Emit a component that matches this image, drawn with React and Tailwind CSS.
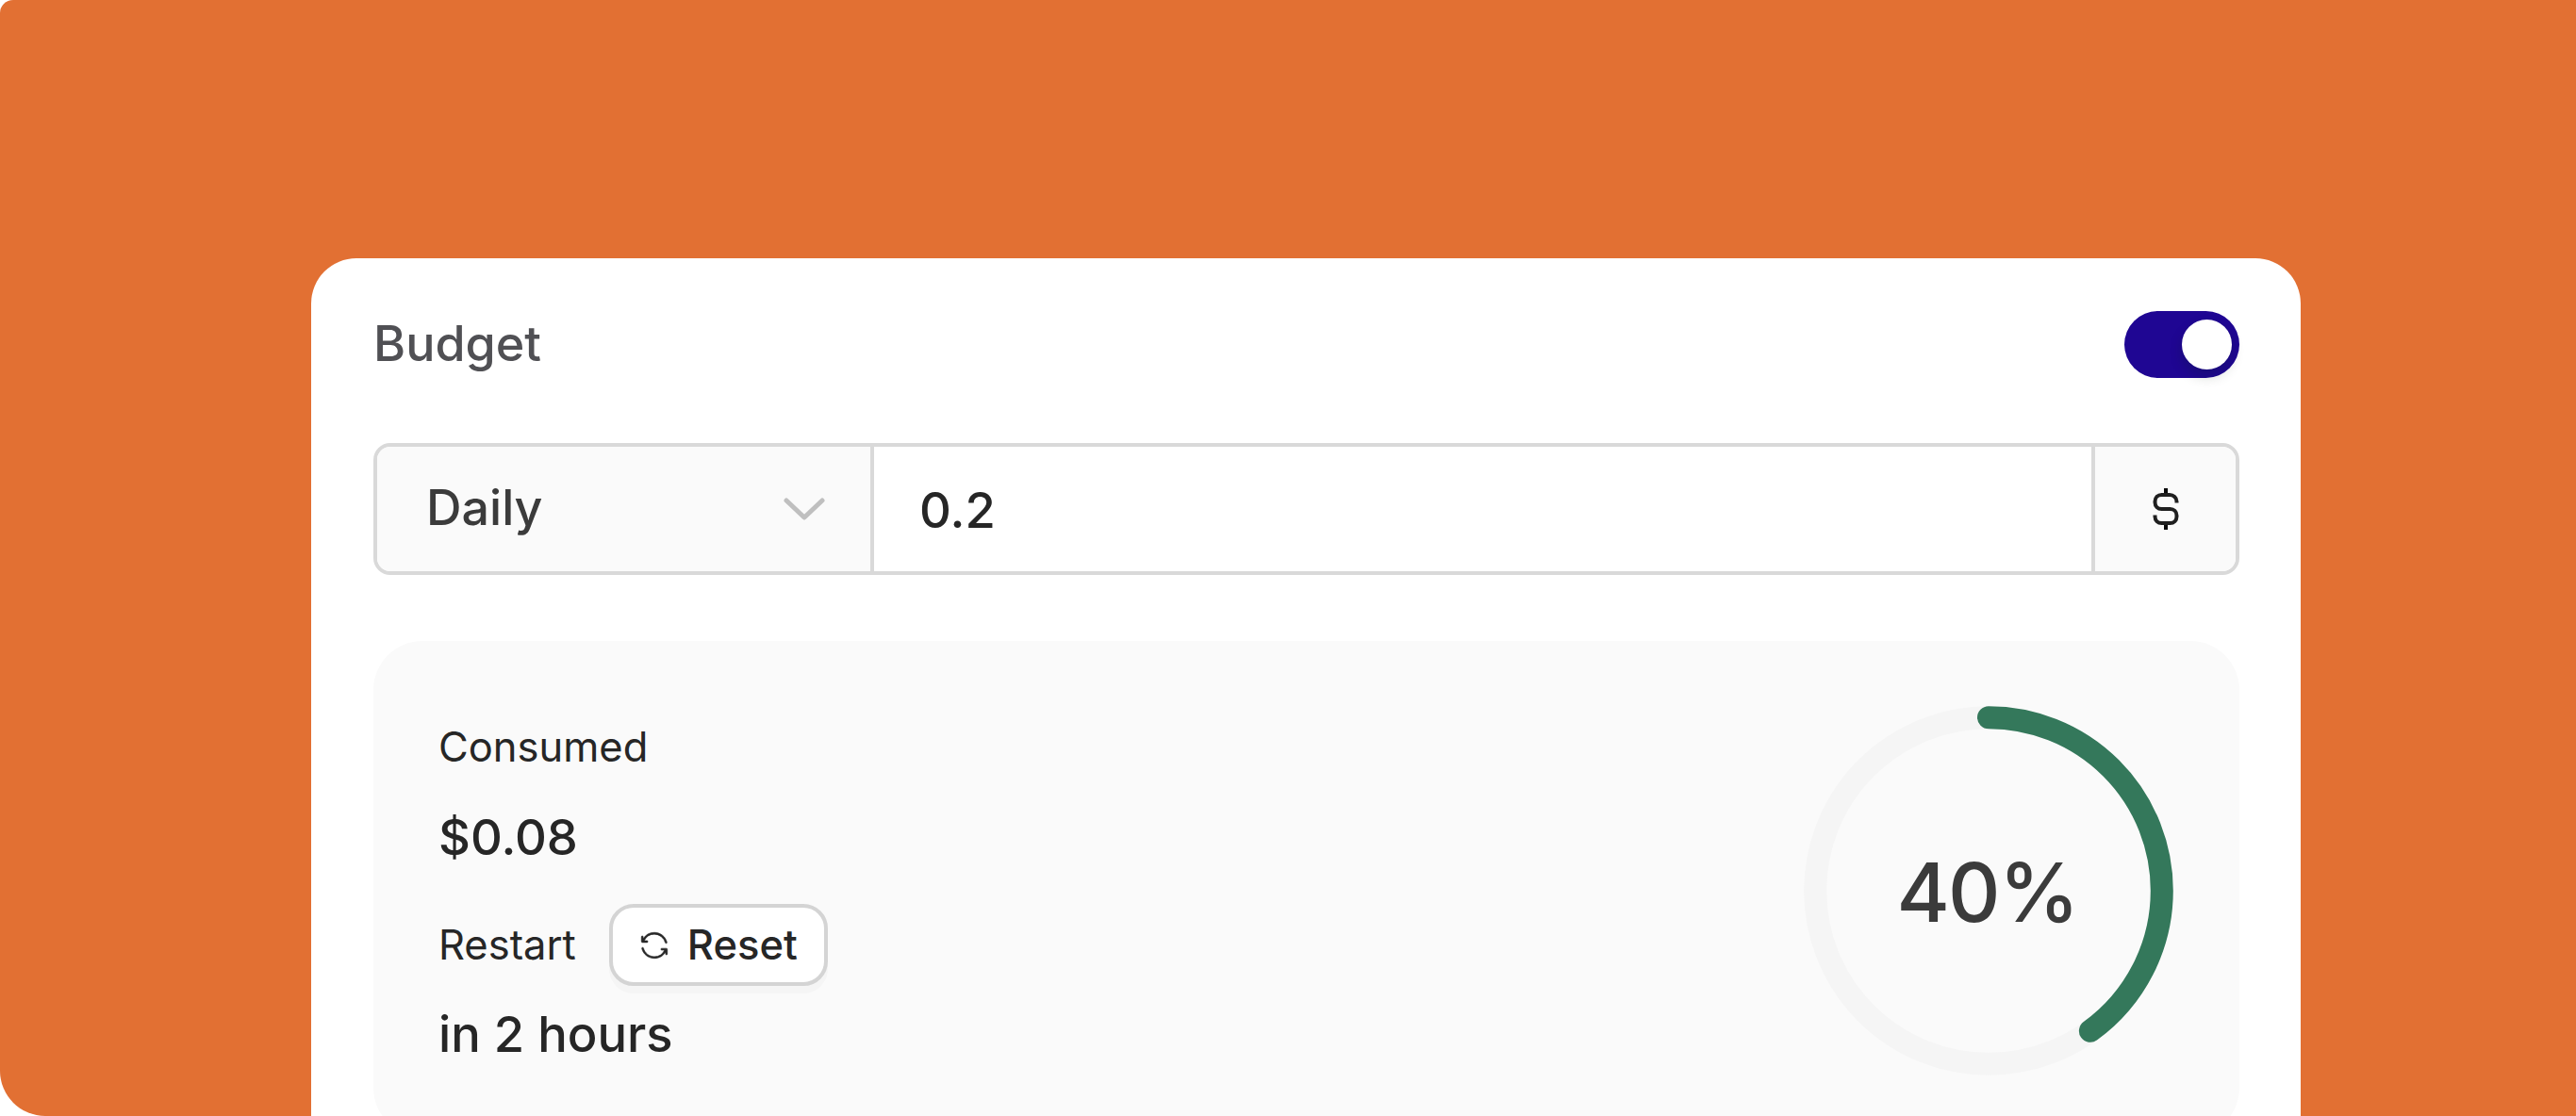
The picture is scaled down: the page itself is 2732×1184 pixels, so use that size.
import React, { useState } from "react";
import { GoSync } from "react-icons/go";

const RADIUS = 183.8;
const CIRCUMFERENCE = 2 * Math.PI * RADIUS;

function Toggle({ checked, onChange }) {
  return (
    <button
      role="switch"
      aria-checked={checked}
      aria-label="Budget"
      onClick={onChange}
      className={`flex items-center w-[122px] h-[71px] px-2 rounded-full ${
        checked ? "justify-end bg-[#1f0693]" : "justify-start bg-[#bfbfbf]"
      }`}
    >
      <span className="size-[53px] rounded-full bg-white shadow-[0_7px_14px_rgba(0,35,11,0.2)]" />
    </button>
  );
}

function ProgressRing({ percent }) {
  return (
    <div className="grid place-items-center size-[392px]">
      <svg
        viewBox="0 0 392 392"
        className="col-start-1 row-start-1 size-full -rotate-90"
        fill="none"
        strokeWidth="24"
      >
        <circle cx="196" cy="196" r={RADIUS} stroke="#f5f5f5" />
        <circle
          cx="196"
          cy="196"
          r={RADIUS}
          stroke="#34785b"
          strokeLinecap="round"
          strokeDasharray={`${(CIRCUMFERENCE * percent) / 100} ${CIRCUMFERENCE}`}
        />
      </svg>
      <span className="col-start-1 row-start-1 pt-1 pr-[3px] text-[86px] leading-none tracking-[-0.02em] font-medium text-[#3b3b3b]">
        {percent}%
      </span>
    </div>
  );
}

function App() {
  const [enabled, setEnabled] = useState(true);

  return (
    <div className="h-[1184px] w-[2732px] bg-white overflow-hidden font-['Inter',sans-serif]">
      <main className="h-full pl-[330px] pr-[292px] pt-[274px] bg-[#e27033] rounded-tl-[14px] rounded-bl-[48px] overflow-hidden">
        <section className="h-[960px] pl-[66px] pr-[65px] pt-14 bg-white rounded-t-[48px]">
          <div className="flex items-center justify-between h-[71px]">
            <h2 className="pb-px text-[52px] leading-none font-medium text-[#505054]">
              Budget
            </h2>
            <Toggle checked={enabled} onChange={() => setEnabled(!enabled)} />
          </div>

          <div className="flex h-[140px] mt-[69px] border-4 border-[#d9d9d9] rounded-[18px] overflow-hidden bg-white text-[52px] leading-none">
            <div className="flex items-center justify-between w-[527px] pl-[52px] pr-[48px] border-r-4 border-[#d9d9d9] bg-[#fafafa]">
              <span className="pb-[2px] font-medium text-[#3b3b3b]">Daily</span>
              <svg
                viewBox="0 0 44 24"
                className="w-11 h-6"
                fill="none"
                stroke="#bfbfbf"
                strokeWidth="5"
              >
                <path
                  d="M3 3 22 21 41 3"
                  strokeLinecap="round"
                  strokeLinejoin="round"
                />
              </svg>
            </div>
            <div className="flex flex-1 items-center pl-12 pt-0.5 text-[52.5px] font-medium text-[#262626]">
              0.2
            </div>
            <div className="flex items-center justify-center w-[153px] border-l-4 border-[#d9d9d9] bg-[#fafafa]">
              <svg
                viewBox="0 0 28 44"
                className="w-7 h-11"
                fill="none"
                stroke="#1f1f1f"
                strokeWidth="4"
              >
                <path d="M14 0v8M14 36v8" stroke="#0a0a0a" />
                <path d="M25.5 15.5V14c0-4-3.5-7-7.5-7H9.5c-4 0-7 3-7 7v1c0 4 3 7 7 7h9c4 0 7 3 7 7v1c0 4-3 7-7 7h-9c-4 0-7-3-7-7v-1.5" />
              </svg>
            </div>
          </div>

          <div className="flex items-start justify-between h-[526px] mt-[70px] pl-[69px] pr-[70px] pt-[69px] bg-[#fafafa] rounded-[52px] text-[#262626]">
            <div className="flex flex-col items-start pt-[17px] leading-none">
              <p className="text-[43.5px] leading-[52px]">Consumed</p>
              <p className="mt-[38px] text-[52.5px] leading-[64px] font-medium">
                $0.08
              </p>
              <div className="flex items-center gap-[35px] mt-[39px]">
                <span className="text-[43.5px]">Restart</span>
                <button className="flex items-center gap-[20px] w-[232px] h-[87px] pl-[29px] border-4 border-[#d4d4d4] rounded-[26px] bg-white text-[43.5px] font-medium shadow-[0_8px_0_#f5f5f5]">
                  <GoSync size={30} stroke="currentColor" strokeWidth={0.5} />
                  Reset
                </button>
              </div>
              <p className="mt-[19px] text-[52.5px] leading-[64px] font-medium">
                in 2 hours
              </p>
            </div>
            <ProgressRing percent={40} />
          </div>
        </section>
      </main>
    </div>
  );
}

export default App;
